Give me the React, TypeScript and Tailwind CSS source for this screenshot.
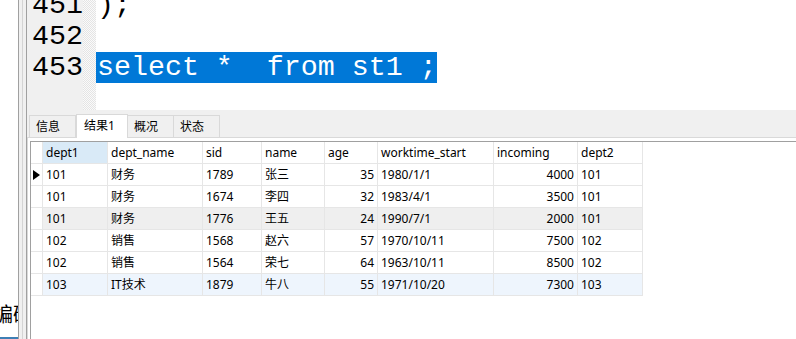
import React from 'react';

const cols = [
  { key: 'dept1', w: 65 },
  { key: 'dept_name', w: 95 },
  { key: 'sid', w: 59 },
  { key: 'name', w: 63 },
  { key: 'age', w: 53, right: true },
  { key: 'worktime_start', w: 116 },
  { key: 'incoming', w: 84, right: true },
  { key: 'dept2', w: 65 },
];

const rows = [
  ['101', '财务', '1789', '张三', '35', '1980/1/1', '4000', '101'],
  ['101', '财务', '1674', '李四', '32', '1983/4/1', '3500', '101'],
  ['101', '财务', '1776', '王五', '24', '1990/7/1', '2000', '101'],
  ['102', '销售', '1568', '赵六', '57', '1970/10/11', '7500', '102'],
  ['102', '销售', '1564', '荣七', '64', '1963/10/11', '8500', '102'],
  ['103', 'IT技术', '1879', '牛八', '55', '1971/10/20', '7300', '103'],
];

const tabs = ['信息', '结果1', '概况', '状态'];

const mono = { fontFamily: '"Liberation Mono", "Courier New", monospace' };

export default function App() {
  return (
    <div
      className="w-[796px] h-[339px] flex overflow-hidden bg-white text-black"
      style={{ fontFamily: '"Noto Sans", "Noto Sans CJK SC", sans-serif' }}
    >
      {/* left object panel, mostly cut off */}
      <div className="w-[19px] shrink-0 flex flex-col bg-white border-r border-[#a0a0a0] overflow-hidden">
        <div className="mt-auto mb-[10px] -ml-[7px] whitespace-nowrap text-[20px] leading-[24px]">编码</div>
        <div className="h-[2px] bg-[#3d7fb5]" />
      </div>
      <div className="w-[4px] shrink-0 bg-[#f0f0f0] border-r border-[#d4d4d4]" />
      <div className="w-[4px] shrink-0 bg-[#f0f0f0] border-r border-[#a0a0a0]" />

      <div className="flex-1 flex flex-col min-w-0">
        {/* sql editor */}
        <div className="h-[110px] shrink-0 flex overflow-hidden bg-white">
          <div className="w-[56px] shrink-0 bg-[#f0f0f0]">
            <div className="-mt-[10px] pl-[5px] text-[28.3px] leading-[31px]" style={mono}>
              <div className="h-[31px]">451</div>
              <div className="h-[31px]">452</div>
              <div className="h-[31px]">453</div>
            </div>
          </div>
          <div className="w-[13px] shrink-0 bg-[repeating-conic-gradient(#e4e4e4_0_25%,#fafafa_0_50%)] bg-[length:2px_2px]" />
          <div className="flex-1">
            <div className="-mt-[10px] text-[28.3px] leading-[31px] whitespace-pre" style={mono}>
              <div className="h-[31px] pl-px">);</div>
              <div className="h-[31px]"></div>
              <div className="h-[31px]">
                <span className="inline-block h-[31px] pl-px bg-[#0078d7] text-white">select *  from st1 ;</span>
              </div>
            </div>
          </div>
        </div>

        {/* result panel */}
        <div className="flex-1 flex flex-col bg-[#f0f0f0] text-[12px]">
          <div className="h-[28px] shrink-0 flex items-end pl-[2px] border-b border-[#d9d9d9]">
            {tabs.map((t, i) =>
              i === 1 ? (
                <div
                  key={t}
                  className="w-[52px] h-[24px] -mb-px bg-white border border-b-0 border-[#d9d9d9] pl-[7px] leading-[22px]"
                >
                  {t}
                </div>
              ) : (
                <div
                  key={t}
                  className="w-[47px] h-[22px] -ml-px first:ml-0 bg-[#f0f0f0] border border-b-0 border-[#d9d9d9] pl-[6px] leading-[22px]"
                >
                  {t}
                </div>
              )
            )}
          </div>
          <div className="flex-1 flex flex-col bg-white border-l border-[#d9d9d9] pt-[3px] pl-[2px]">
            <div className="flex-1 border-t border-l border-[#a0a0a0]">
              <div className="flex h-[22px]">
                <div className="w-[12px] shrink-0 border-r border-b border-[#e6e6e6]" />
                {cols.map((c, i) => (
                  <div
                    key={c.key}
                    style={{ width: c.w }}
                    className={
                      'shrink-0 flex items-center px-[3px] border-r border-b border-[#e6e6e6] ' +
                      (i === 0 ? 'bg-[#d9eaf7]' : '')
                    }
                  >
                    {c.key}
                  </div>
                ))}
              </div>
              {rows.map((r, ri) => (
                <div key={ri} className="flex h-[22px]">
                  <div className="w-[12px] shrink-0 flex items-center justify-center border-r border-b border-[#e6e6e6]">
                    {ri === 0 && (
                      <svg width="7" height="10" viewBox="0 0 7 10">
                        <polygon points="0,0 7,5 0,10" fill="#000" />
                      </svg>
                    )}
                  </div>
                  {r.map((v, ci) => (
                    <div
                      key={ci}
                      style={{ width: cols[ci].w }}
                      className={
                        'shrink-0 flex items-center px-[3px] border-r border-b border-[#e6e6e6] ' +
                        (cols[ci].right ? 'justify-end ' : '') +
                        (ri === 2 ? 'bg-[#efefef]' : ri === 5 ? 'bg-[#eef5fd]' : '')
                      }
                    >
                      {v}
                    </div>
                  ))}
                </div>
              ))}
            </div>
          </div>
        </div>
      </div>
    </div>
  );
}
